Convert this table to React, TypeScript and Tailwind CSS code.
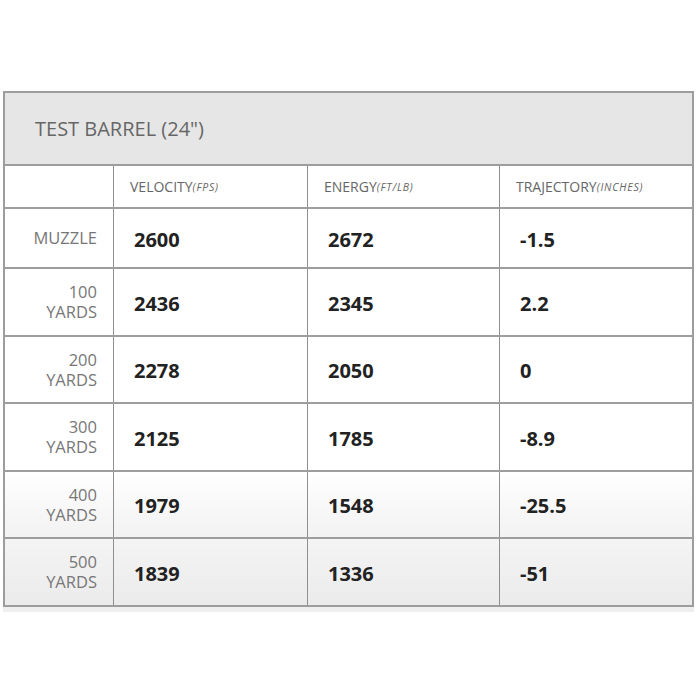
const rows = [
  { label: ["MUZZLE"], v: "2600", e: "2672", t: "-1.5", h: "h-[60px]", bg: "bg-white" },
  { label: ["100", "YARDS"], v: "2436", e: "2345", t: "2.2", h: "h-[68px]", bg: "bg-white" },
  { label: ["200", "YARDS"], v: "2278", e: "2050", t: "0", h: "h-[67px]", bg: "bg-white" },
  { label: ["300", "YARDS"], v: "2125", e: "1785", t: "-8.9", h: "h-[68px]", bg: "bg-white" },
  { label: ["400", "YARDS"], v: "1979", e: "1548", t: "-25.5", h: "h-[67px]", bg: "bg-gradient-to-b from-white to-[#f2f2f2]" },
  { label: ["500", "YARDS"], v: "1839", e: "1336", t: "-51", h: "h-[66px]", bg: "bg-gradient-to-b from-[#f4f4f4] to-[#ebebeb]" },
];

const cols = [
  { name: "VELOCITY", unit: "(FPS)" },
  { name: "ENERGY", unit: "(FT/LB)" },
  { name: "TRAJECTORY", unit: "(INCHES)" },
];

export default function App() {
  return (
    <div className="w-[700px] h-[700px] bg-white pt-[91px] pl-[3px] font-['Open_Sans',sans-serif]">
      <div className="w-[691px] border-2 border-[#9d9d9d] shadow-[0_5px_0_#efefef]">
        <div className="h-[73px] bg-[#e6e6e6] border-b-2 border-[#9d9d9d] flex items-center pl-[30px]">
          <span className="text-[20px] text-[#666]">TEST BARREL (24")</span>
        </div>

        <div className="grid grid-cols-[108px_194px_192px_1fr] h-[43px] border-b-2 border-[#9d9d9d] bg-white">
          <div />
          {cols.map((c) => (
            <div key={c.name} className="border-l border-[#8f8f8f] flex items-center pl-[16px]">
              <span className="text-[14px] text-[#666]">{c.name}</span>
              <span className="text-[10.5px] italic tracking-[0.8px] text-[#666] mt-[3px]">{c.unit}</span>
            </div>
          ))}
        </div>

        {rows.map((r, i) => (
          <div
            key={r.v}
            className={`grid grid-cols-[108px_194px_192px_1fr] ${r.h} ${r.bg} ${
              i < rows.length - 1 ? "border-b-2 border-[#9d9d9d]" : ""
            }`}
          >
            <div className="flex flex-col items-end justify-center pr-[16px] text-[16.5px] leading-[20px] text-[#777]">
              {r.label.map((l) => (
                <span key={l}>{l}</span>
              ))}
            </div>
            {[r.v, r.e, r.t].map((val, j) => (
              <div key={j} className="border-l border-[#8f8f8f] flex items-center pl-[20px] pt-[3px]">
                <span className="text-[20px] font-bold text-[#222]">{val}</span>
              </div>
            ))}
          </div>
        ))}
      </div>
    </div>
  );
}
